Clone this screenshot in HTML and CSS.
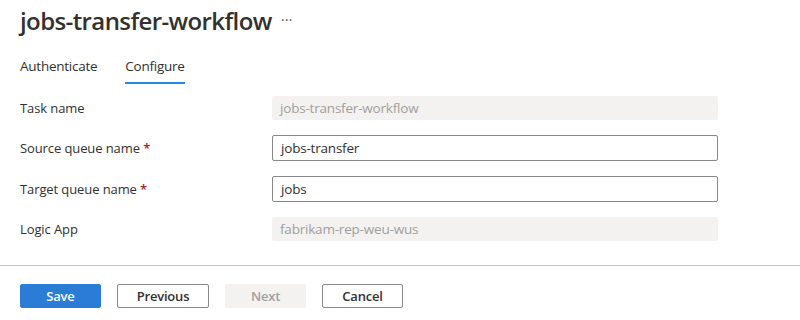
FILE: index.html
```html
<!DOCTYPE html>
<html>
<head>
<meta charset="utf-8">
<link rel="stylesheet" href="styles.css">
</head>
<body>
<div class="page">
  <header class="title-row">
    <h1 class="title">jobs-transfer-workflow</h1>
    <span class="more">···</span>
  </header>
  <nav class="tabs">
    <span class="tab">Authenticate</span>
    <span class="tab active">Configure</span>
  </nav>
  <form class="form">
    <div class="row r-dis">
      <label class="label">Task name</label>
      <div class="field disabled">jobs-transfer-workflow</div>
    </div>
    <div class="row r-en">
      <label class="label">Source queue name <span class="req">*</span></label>
      <div class="field">jobs-transfer</div>
    </div>
    <div class="row r-en">
      <label class="label">Target queue name <span class="req">*</span></label>
      <div class="field">jobs</div>
    </div>
    <div class="row r-dis">
      <label class="label">Logic App</label>
      <div class="field disabled">fabrikam-rep-weu-wus</div>
    </div>
  </form>
</div>
<footer class="footer">
  <button class="btn primary">Save</button>
  <button class="btn wide">Previous</button>
  <button class="btn dis">Next</button>
  <button class="btn">Cancel</button>
</footer>
</body>
</html>
```

FILE: styles.css
```css
* { box-sizing: border-box; }
html, body { margin: 0; padding: 0; background: #fff; }
body {
  font-family: "Open Sans", "Noto Sans", sans-serif;
  color: #323130;
  width: 800px;
  height: 320px;
  overflow: hidden;
}
.page { padding: 0 20px; }
.title-row {
  display: flex;
  align-items: center;
  height: 42px;
  gap: 9px;
}
.title {
  margin: 0;
  font-size: 24px;
  font-weight: 600;
  letter-spacing: -0.6px;
  line-height: 42px;
}
.more {
  font-size: 15px;
  color: #605e5c;
  margin-top: -4px;
}
.tabs {
  display: flex;
  gap: 28px;
  margin-top: 10px;
  height: 32px;
}
.tab {
  font-size: 13.5px;
  line-height: 28px;
  height: 32px;
  letter-spacing: -0.25px;
}
.tab.active {
  border-bottom: 2px solid #2b88d8;
}
.form {
  margin-top: 12px;
  display: flex;
  flex-direction: column;
  gap: 15px;
}
.row {
  display: grid;
  grid-template-columns: 252px 446px;
  align-items: center;
}
.label {
  font-size: 13px;
  letter-spacing: -0.1px;
}
.req { color: #a4262c; font-weight: 600; }
.field {
  height: 26px;
  border: 1px solid #8a8886;
  border-radius: 2px;
  font-size: 13.5px;
  line-height: 24px;
  padding: 0 8px;
  letter-spacing: -0.2px;
}
.field.disabled {
  height: 24px;
  line-height: 24px;
  border: none;
  background: #f3f2f1;
  color: #a19f9d;
}
.footer {
  margin-top: 24px;
  border-top: 1px solid #c8c6c4;
  padding: 18px 20px 0;
  display: flex;
  gap: 16px;
}
.btn {
  font-family: "Open Sans", "Noto Sans", sans-serif;
  min-width: 81px;
  height: 24px;
  padding: 0 14px;
  border: 1px solid #8a8886;
  border-radius: 2px;
  background: #fff;
  color: #323130;
  font-size: 13px;
  font-weight: 600;
  letter-spacing: -0.2px;
}
.btn.wide { min-width: 92px; }
.btn.primary {
  background: #2b7cd6;
  border-color: #2b7cd6;
  color: #fff;
}
.btn.dis {
  background: #f3f2f1;
  border-color: #f3f2f1;
  color: #a19f9d;
}
```
